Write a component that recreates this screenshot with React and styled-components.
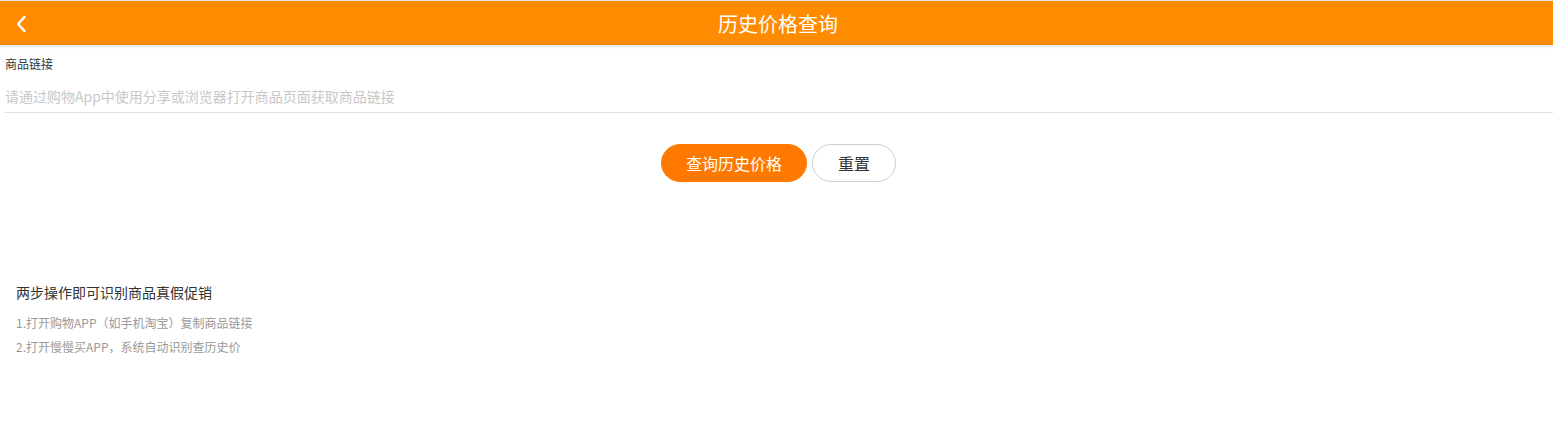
import React from 'react'
import styled, { createGlobalStyle } from 'styled-components'

const GlobalStyle = createGlobalStyle`
  body {
    margin: 0;
    background: #fff;
    font-family: "Microsoft YaHei", "Noto Sans CJK SC", "Liberation Sans", sans-serif;
  }
`

const Page = styled.div`
  width: 100%;
`

const Header = styled.header`
  position: relative;
  height: 44px;
  border-top: 1px solid #e2e2e2;
  background: #ff8c00;
  box-shadow: 0 1px 3px rgba(0, 0, 0, 0.18);
  display: flex;
  align-items: center;
  justify-content: center;
`

const BackButton = styled.button`
  position: absolute;
  left: 6px;
  top: 7px;
  width: 30px;
  height: 32px;
  border: 0;
  padding: 0;
  background: transparent;
  display: flex;
  align-items: center;
  justify-content: center;
`

const Title = styled.h1`
  margin: 0 0 0 3px;
  color: #fff;
  font-size: 20px;
  font-weight: normal;
`

const Form = styled.div`
  padding: 11px 0 0 5px;
`

const Label = styled.div`
  font-size: 12px;
  color: #333;
  line-height: 16px;
`

const Input = styled.input`
  display: block;
  width: 100%;
  box-sizing: border-box;
  margin-top: 8px;
  height: 33px;
  border: 0;
  border-bottom: 1px solid #e0e0e0;
  padding: 0;
  font-family: inherit;
  font-size: 14px;
  outline: none;
  &::placeholder {
    color: #c8c8c8;
  }
`

const Actions = styled.div`
  display: flex;
  justify-content: center;
  gap: 5px;
  margin-top: 31px;
  padding-left: 4px;
`

const Button = styled.button`
  height: 38px;
  padding: 0;
  width: ${p => (p.primary ? '146px' : '84px')};
  border-radius: 19px;
  border: 1px solid ${p => (p.primary ? '#ff7800' : '#cfcfcf')};
  background: ${p => (p.primary ? '#ff7800' : '#fff')};
  color: ${p => (p.primary ? '#fff' : '#333')};
  font-family: inherit;
  font-size: 16px;
`

const Tips = styled.section`
  padding: 100px 0 0 16px;
`

const TipsTitle = styled.div`
  font-size: 14px;
  color: #333;
  line-height: 20px;
  margin-bottom: 9px;
`

const TipsLine = styled.div`
  font-size: 12px;
  color: #999;
  line-height: 24px;
`

export default function App() {
  return (
    <Page>
      <GlobalStyle />
      <Header>
        <BackButton aria-label="back">
          <svg width="12" height="18" viewBox="0 0 12 18">
            <path d="M9.5 2 L3 9 L9.5 16" fill="none" stroke="#fff" strokeWidth="2.4" strokeLinecap="round" strokeLinejoin="round" />
          </svg>
        </BackButton>
        <Title>历史价格查询</Title>
      </Header>
      <Form>
        <Label>商品链接</Label>
        <Input placeholder="请通过购物App中使用分享或浏览器打开商品页面获取商品链接" />
      </Form>
      <Actions>
        <Button primary>查询历史价格</Button>
        <Button>重置</Button>
      </Actions>
      <Tips>
        <TipsTitle>两步操作即可识别商品真假促销</TipsTitle>
        <TipsLine>1.打开购物APP（如手机淘宝）复制商品链接</TipsLine>
        <TipsLine>2.打开慢慢买APP，系统自动识别查历史价</TipsLine>
      </Tips>
    </Page>
  )
}
